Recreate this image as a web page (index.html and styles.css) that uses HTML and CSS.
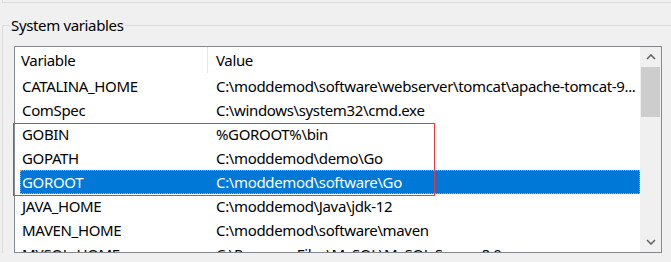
FILE: index.html
```html
<!DOCTYPE html>
<html>

<head>
  <meta charset="UTF-8">
  <link rel="stylesheet" href="styles.css">
</head>

<body>
  <div class="prevGroup"></div>

  <fieldset class="group">
    <legend class="groupTitle">System variables</legend>

    <div class="listBox">
      <div class="listArea">
        <div class="header">
          <div class="col1">Variable</div>
          <div class="col2">Value</div>
        </div>

        <div class="row">
          <div class="col1">CATALINA_HOME</div>
          <div class="col2">C:\moddemod\software\webserver\tomcat\apache-tomcat-9...</div>
        </div>
        <div class="row">
          <div class="col1">ComSpec</div>
          <div class="col2">C:\windows\system32\cmd.exe</div>
        </div>
        <div class="row">
          <div class="col1">GOBIN</div>
          <div class="col2">%GOROOT%\bin</div>
        </div>
        <div class="row">
          <div class="col1">GOPATH</div>
          <div class="col2">C:\moddemod\demo\Go</div>
        </div>
        <div class="row selected">
          <div class="col1">GOROOT</div>
          <div class="col2">C:\moddemod\software\Go</div>
        </div>
        <div class="row">
          <div class="col1">JAVA_HOME</div>
          <div class="col2">C:\moddemod\Java\jdk-12</div>
        </div>
        <div class="row">
          <div class="col1">MAVEN_HOME</div>
          <div class="col2">C:\moddemod\software\maven</div>
        </div>
        <div class="row">
          <div class="col1">MYSQL_HOME</div>
          <div class="col2">C:\Program Files\MySQL\MySQL Server 8.0</div>
        </div>
      </div>

      <div class="scrollBar">
        <div class="scrollBtn">
          <svg width="10" height="6" viewBox="0 0 10 6"><path d="M1 5 L5 1 L9 5" fill="none" stroke="#606060" stroke-width="1.5"/></svg>
        </div>
        <div class="thumb"></div>
        <div class="track"></div>
        <div class="scrollBtn">
          <svg width="10" height="6" viewBox="0 0 10 6"><path d="M1 1 L5 5 L9 1" fill="none" stroke="#606060" stroke-width="1.5"/></svg>
        </div>
      </div>
    </div>
  </fieldset>

  <!-- annotation box -->
  <div class="redBox"></div>
</body>

</html>
```

FILE: styles.css
```css
body {
  margin: 0;
  background-color: #f0f0f0;
  font-family: "Noto Sans", "Open Sans", sans-serif;
  font-size: 15px;
  letter-spacing: -0.35px;
  color: #000;
  width: 671px;
  height: 262px;
  overflow: hidden;
}
div.prevGroup {
  height: 2px;
  margin-left: 2px;
  border-left: 1px solid #dcdcdc;
  border-bottom: 1px solid #dcdcdc;
}
fieldset.group {
  margin: 12px 0 0 2px;
  padding: 0 0 0 11px;
  border: 1px solid #dcdcdc;
  border-right: none;
  border-bottom: none;
  min-width: 0;
}
legend.groupTitle {
  margin-left: -4px;
  padding: 0 1px;
  line-height: 20px;
}
div.listBox {
  display: flex;
  margin-top: 11px;
  width: 646px;
  height: 205px;
  border: 1px solid #828790;
  background-color: #fff;
}
div.listArea {
  flex: 1;
  overflow: hidden;
  padding-left: 5px;
}
div.header {
  display: flex;
  height: 27px;
  line-height: 26px;
}
div.header .col2 {
  border-left: 1px solid #e5e5e5;
  height: 26px;
}
div.row {
  display: flex;
  box-sizing: border-box;
  height: 24px;
  line-height: 22px;
  border: 1px solid transparent;
}
div.row.selected {
  background-color: #0078d7;
  color: #fff;
  border: 1px dotted #e8a040;
}
.col1 {
  width: 186px;
  padding-left: 1px;
  flex: none;
}
.col2 {
  flex: 1;
  padding-left: 8px;
  white-space: nowrap;
  overflow: hidden;
}
div.scrollBar {
  width: 21px;
  display: flex;
  flex-direction: column;
  background-color: #f0f0f0;
}
div.scrollBtn {
  height: 20px;
  display: flex;
  align-items: center;
  justify-content: center;
}
div.thumb {
  height: 50px;
  margin: 0 1px;
  background-color: #cdcdcd;
}
div.track {
  flex: 1;
}
div.redBox {
  position: absolute;
  left: 13px;
  top: 123px;
  width: 420px;
  height: 71px;
  border: 1px solid #e8393c;
}
```
